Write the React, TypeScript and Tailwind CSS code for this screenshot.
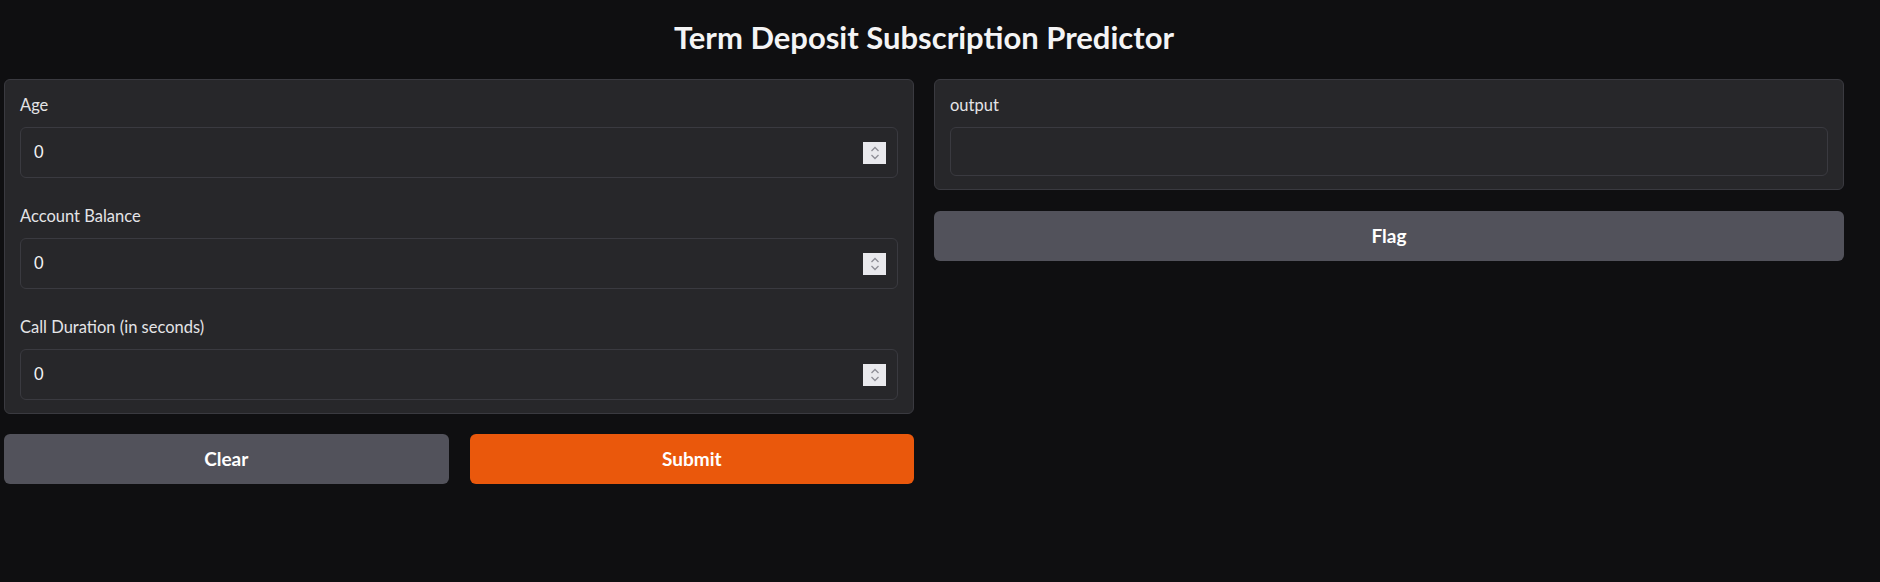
import React from 'react';

const font = { fontFamily: 'Lato, "Noto Sans", sans-serif' };

function Spinner() {
  return (
    <div className="flex h-[22px] w-[23px] flex-col items-center justify-center gap-[2px] bg-[#e9e9ed]">
      <svg width="10" height="6" viewBox="0 0 10 6" fill="none" stroke="#8e8e96" strokeWidth="1.3">
        <path d="M1.5 5 L5 1.5 L8.5 5" />
      </svg>
      <svg width="10" height="6" viewBox="0 0 10 6" fill="none" stroke="#8e8e96" strokeWidth="1.3">
        <path d="M1.5 1 L5 4.5 L8.5 1" />
      </svg>
    </div>
  );
}

function NumberField({ label, first }: { label: string; first?: boolean }) {
  return (
    <div className={first ? '' : 'mt-[29px]'}>
      <div className="mb-[11px] h-[20px] text-[16.5px] leading-[19px] text-[#e4e4e7]">{label}</div>
      <div className="flex h-[51px] items-center justify-between rounded-[6px] border border-[#3a3a40] bg-[#27272a] pl-[13px] pr-[11px]">
        <span className="text-[16.5px] text-[#f4f4f5]">0</span>
        <Spinner />
      </div>
    </div>
  );
}

export default function App() {
  return (
    <div className="min-h-screen w-[1880px] bg-[#0f0f11] pl-[4px] pr-[36px]" style={font}>
      <div className="flex h-[76px] items-center justify-center pb-[1px]">
        <h1 className="text-[31px] font-bold text-[#f4f4f5]">Term Deposit Subscription Predictor</h1>
      </div>
      <div className="mt-[3px] grid grid-cols-2 gap-[20px]">
        <div className="flex flex-col gap-[20px]">
          <div className="rounded-[6px] border border-[#3a3a40] bg-[#27272a] px-[15px] pb-[13px] pt-[16px]">
            <NumberField label="Age" first />
            <NumberField label="Account Balance" />
            <NumberField label="Call Duration (in seconds)" />
          </div>
          <div className="grid grid-cols-2 gap-[21px]">
            <button className="h-[50px] rounded-[6px] bg-[#52525b] text-[19px] font-bold text-white">Clear</button>
            <button className="h-[50px] rounded-[6px] bg-[#ea580c] text-[19px] font-bold text-white">Submit</button>
          </div>
        </div>
        <div className="flex flex-col gap-[21px]">
          <div className="rounded-[6px] border border-[#3a3a40] bg-[#27272a] px-[15px] pb-[13px] pt-[16px]">
            <div className="mb-[11px] h-[20px] text-[16.5px] leading-[19px] text-[#e4e4e7]">output</div>
            <div className="h-[49px] rounded-[6px] border border-[#3a3a40] bg-[#27272a]" />
          </div>
          <button className="h-[50px] rounded-[6px] bg-[#52525b] text-[19px] font-bold text-white">Flag</button>
        </div>
      </div>
    </div>
  );
}
